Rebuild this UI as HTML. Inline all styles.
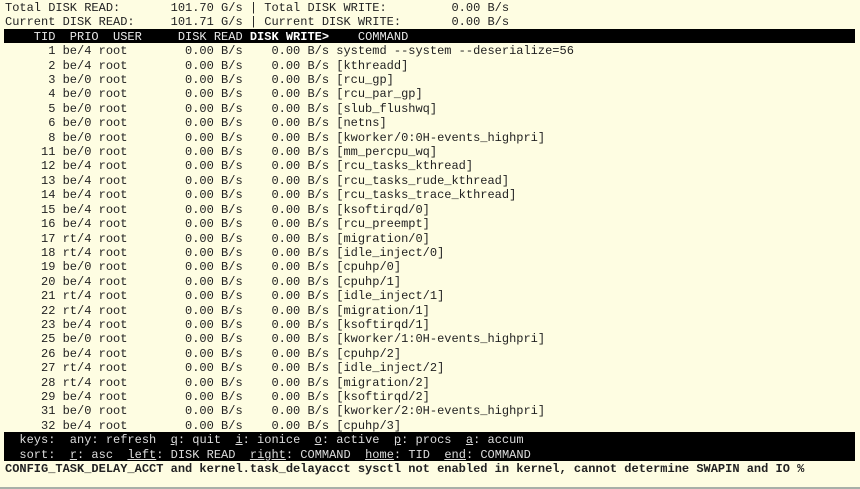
<!DOCTYPE html>
<html><head><style>
body{margin:0;width:860px;height:489px;background:#fefde2;overflow:hidden;position:relative}
pre{margin:0;position:absolute;left:5px;top:1px;font-family:"Liberation Mono",monospace;font-size:12px;line-height:14.4px;color:#222}
.bar{position:absolute;left:4px;width:851px;background:#000}
.hd{color:#e8e8e8}
.hd b{color:#fff}
.k{color:#ddd}
u{text-decoration:underline}
.line{position:absolute;left:0;top:487px;width:860px;height:2px;background:#a8b0a8}
</style></head><body>
<div class="bar" style="top:29px;height:14.4px"></div>
<div class="bar" style="top:432px;height:29px"></div>
<div class="line"></div>
<pre>Total DISK READ:       101.70 G/s | Total DISK WRITE:         0.00 B/s
Current DISK READ:     101.71 G/s | Current DISK WRITE:       0.00 B/s
<span class="hd">    TID  PRIO  USER     DISK READ <b>DISK WRITE&gt;</b>    COMMAND</span>
      1 be/4 root        0.00 B/s    0.00 B/s systemd --system --deserialize=56
      2 be/4 root        0.00 B/s    0.00 B/s [kthreadd]
      3 be/0 root        0.00 B/s    0.00 B/s [rcu_gp]
      4 be/0 root        0.00 B/s    0.00 B/s [rcu_par_gp]
      5 be/0 root        0.00 B/s    0.00 B/s [slub_flushwq]
      6 be/0 root        0.00 B/s    0.00 B/s [netns]
      8 be/0 root        0.00 B/s    0.00 B/s [kworker/0:0H-events_highpri]
     11 be/0 root        0.00 B/s    0.00 B/s [mm_percpu_wq]
     12 be/4 root        0.00 B/s    0.00 B/s [rcu_tasks_kthread]
     13 be/4 root        0.00 B/s    0.00 B/s [rcu_tasks_rude_kthread]
     14 be/4 root        0.00 B/s    0.00 B/s [rcu_tasks_trace_kthread]
     15 be/4 root        0.00 B/s    0.00 B/s [ksoftirqd/0]
     16 be/4 root        0.00 B/s    0.00 B/s [rcu_preempt]
     17 rt/4 root        0.00 B/s    0.00 B/s [migration/0]
     18 rt/4 root        0.00 B/s    0.00 B/s [idle_inject/0]
     19 be/0 root        0.00 B/s    0.00 B/s [cpuhp/0]
     20 be/4 root        0.00 B/s    0.00 B/s [cpuhp/1]
     21 rt/4 root        0.00 B/s    0.00 B/s [idle_inject/1]
     22 rt/4 root        0.00 B/s    0.00 B/s [migration/1]
     23 be/4 root        0.00 B/s    0.00 B/s [ksoftirqd/1]
     25 be/0 root        0.00 B/s    0.00 B/s [kworker/1:0H-events_highpri]
     26 be/4 root        0.00 B/s    0.00 B/s [cpuhp/2]
     27 rt/4 root        0.00 B/s    0.00 B/s [idle_inject/2]
     28 rt/4 root        0.00 B/s    0.00 B/s [migration/2]
     29 be/4 root        0.00 B/s    0.00 B/s [ksoftirqd/2]
     31 be/0 root        0.00 B/s    0.00 B/s [kworker/2:0H-events_highpri]
     32 be/4 root        0.00 B/s    0.00 B/s [cpuhp/3]
<span class="k">  keys:  any: refresh  <u>q</u>: quit  <u>i</u>: ionice  <u>o</u>: active  <u>p</u>: procs  <u>a</u>: accum</span>
<span class="k">  sort:  <u>r</u>: asc  <u>left</u>: DISK READ  <u>right</u>: COMMAND  <u>home</u>: TID  <u>end</u>: COMMAND</span>
<b>CONFIG_TASK_DELAY_ACCT and kernel.task_delayacct sysctl not enabled in kernel, cannot determine SWAPIN and IO %</b></pre>
</body></html>
